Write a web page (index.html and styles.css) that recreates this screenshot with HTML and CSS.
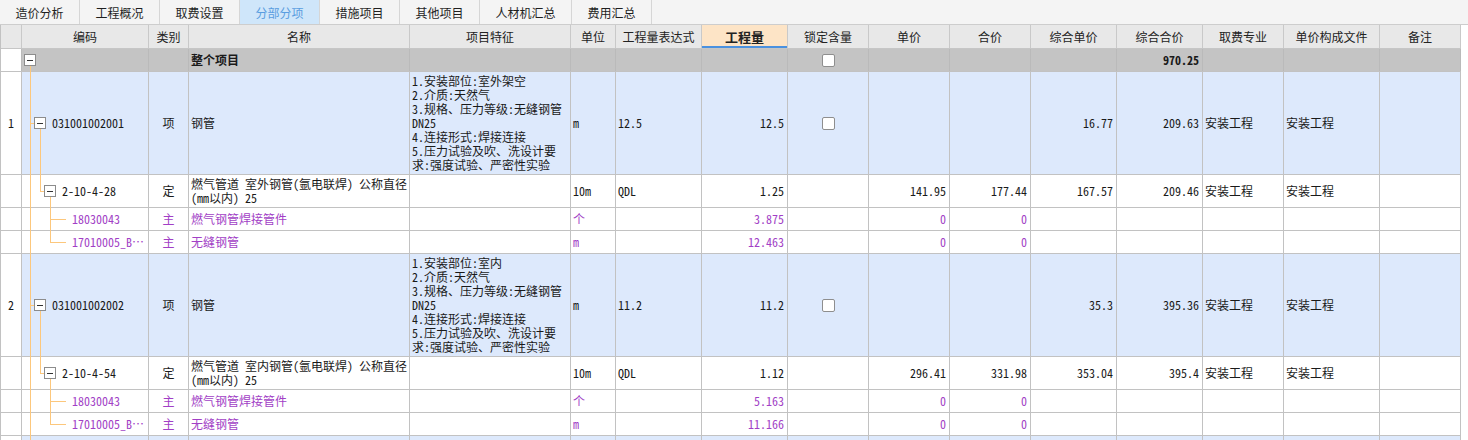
FILE: index.html
```html
<!DOCTYPE html>
<html lang="zh-CN">
<head>
<meta charset="utf-8">
<title>分部分项</title>
<link rel="stylesheet" href="styles.css">
</head>
<body>
<div class="tabs">
  <div class="tab">造价分析</div>
  <div class="tab">工程概况</div>
  <div class="tab">取费设置</div>
  <div class="tab active">分部分项</div>
  <div class="tab">措施项目</div>
  <div class="tab">其他项目</div>
  <div class="tab wide">人材机汇总</div>
  <div class="tab">费用汇总</div>
</div>

<div class="grid">
  <div class="row hdr">
    <div class="c"></div>
    <div class="c">编码</div>
    <div class="c">类别</div>
    <div class="c">名称</div>
    <div class="c">项目特征</div>
    <div class="c">单位</div>
    <div class="c">工程量表达式</div>
    <div class="c hot">工程量</div>
    <div class="c">锁定含量</div>
    <div class="c">单价</div>
    <div class="c">合价</div>
    <div class="c">综合单价</div>
    <div class="c">综合合价</div>
    <div class="c">取费专业</div>
    <div class="c">单价构成文件</div>
    <div class="c">备注</div>
  </div>

  <div class="row grp h1">
    <div class="c num"></div>
    <div class="c code lv0"><span class="ln va-down"></span><span class="box"></span></div>
    <div class="c"></div>
    <div class="c b">整个项目</div>
    <div class="c"></div>
    <div class="c"></div>
    <div class="c"></div>
    <div class="c"></div>
    <div class="c mid"><span class="cb"></span></div>
    <div class="c"></div>
    <div class="c"></div>
    <div class="c"></div>
    <div class="c r b">970.25</div>
    <div class="c"></div>
    <div class="c"></div>
    <div class="c"></div>
  </div>

  <div class="row item h7">
    <div class="c num">1</div>
    <div class="c code lv1"><span class="ln va"></span><span class="ln h1l"></span><span class="ln vb-down"></span><span class="box"></span><span>031001002001</span></div>
    <div class="c mid">项</div>
    <div class="c">钢管</div>
    <div class="c"><div class="ml">1.安装部位:室外架空<br>2.介质:天然气<br>3.规格、压力等级:无缝钢管<br>DN25<br>4.连接形式:焊接连接<br>5.压力试验及吹、洗设计要<br>求:强度试验、严密性实验</div></div>
    <div class="c">m</div>
    <div class="c">12.5</div>
    <div class="c r">12.5</div>
    <div class="c mid"><span class="cb"></span></div>
    <div class="c"></div>
    <div class="c"></div>
    <div class="c r">16.77</div>
    <div class="c r">209.63</div>
    <div class="c">安装工程</div>
    <div class="c">安装工程</div>
    <div class="c"></div>
  </div>

  <div class="row plain h2">
    <div class="c num"></div>
    <div class="c code lv2"><span class="ln va"></span><span class="ln vb-up"></span><span class="ln h2l"></span><span class="ln vc-down"></span><span class="box"></span><span>2-10-4-28</span></div>
    <div class="c mid">定</div>
    <div class="c"><div class="ml">燃气管道 室外钢管(氩电联焊) 公称直径<br>(mm以内) 25</div></div>
    <div class="c"></div>
    <div class="c">10m</div>
    <div class="c">QDL</div>
    <div class="c r">1.25</div>
    <div class="c"></div>
    <div class="c r">141.95</div>
    <div class="c r">177.44</div>
    <div class="c r">167.57</div>
    <div class="c r">209.46</div>
    <div class="c">安装工程</div>
    <div class="c">安装工程</div>
    <div class="c"></div>
  </div>

  <div class="row plain mat h1">
    <div class="c num"></div>
    <div class="c code lv3"><span class="ln va"></span><span class="ln vc-full"></span><span class="ln h3l"></span><span>18030043</span></div>
    <div class="c mid">主</div>
    <div class="c">燃气钢管焊接管件</div>
    <div class="c"></div>
    <div class="c">个</div>
    <div class="c"></div>
    <div class="c r">3.875</div>
    <div class="c"></div>
    <div class="c r">0</div>
    <div class="c r">0</div>
    <div class="c"></div>
    <div class="c"></div>
    <div class="c"></div>
    <div class="c"></div>
    <div class="c"></div>
  </div>

  <div class="row plain mat h1">
    <div class="c num"></div>
    <div class="c code lv3"><span class="ln va"></span><span class="ln vc-up"></span><span class="ln h3l"></span><span>17010005_B…</span></div>
    <div class="c mid">主</div>
    <div class="c">无缝钢管</div>
    <div class="c"></div>
    <div class="c">m</div>
    <div class="c"></div>
    <div class="c r">12.463</div>
    <div class="c"></div>
    <div class="c r">0</div>
    <div class="c r">0</div>
    <div class="c"></div>
    <div class="c"></div>
    <div class="c"></div>
    <div class="c"></div>
    <div class="c"></div>
  </div>

  <div class="row item h7">
    <div class="c num">2</div>
    <div class="c code lv1"><span class="ln va"></span><span class="ln h1l"></span><span class="ln vb-down"></span><span class="box"></span><span>031001002002</span></div>
    <div class="c mid">项</div>
    <div class="c">钢管</div>
    <div class="c"><div class="ml">1.安装部位:室内<br>2.介质:天然气<br>3.规格、压力等级:无缝钢管<br>DN25<br>4.连接形式:焊接连接<br>5.压力试验及吹、洗设计要<br>求:强度试验、严密性实验</div></div>
    <div class="c">m</div>
    <div class="c">11.2</div>
    <div class="c r">11.2</div>
    <div class="c mid"><span class="cb"></span></div>
    <div class="c"></div>
    <div class="c"></div>
    <div class="c r">35.3</div>
    <div class="c r">395.36</div>
    <div class="c">安装工程</div>
    <div class="c">安装工程</div>
    <div class="c"></div>
  </div>

  <div class="row plain h2">
    <div class="c num"></div>
    <div class="c code lv2"><span class="ln va"></span><span class="ln vb-up"></span><span class="ln h2l"></span><span class="ln vc-down"></span><span class="box"></span><span>2-10-4-54</span></div>
    <div class="c mid">定</div>
    <div class="c"><div class="ml">燃气管道 室内钢管(氩电联焊) 公称直径<br>(mm以内) 25</div></div>
    <div class="c"></div>
    <div class="c">10m</div>
    <div class="c">QDL</div>
    <div class="c r">1.12</div>
    <div class="c"></div>
    <div class="c r">296.41</div>
    <div class="c r">331.98</div>
    <div class="c r">353.04</div>
    <div class="c r">395.4</div>
    <div class="c">安装工程</div>
    <div class="c">安装工程</div>
    <div class="c"></div>
  </div>

  <div class="row plain mat h1">
    <div class="c num"></div>
    <div class="c code lv3"><span class="ln va"></span><span class="ln vc-full"></span><span class="ln h3l"></span><span>18030043</span></div>
    <div class="c mid">主</div>
    <div class="c">燃气钢管焊接管件</div>
    <div class="c"></div>
    <div class="c">个</div>
    <div class="c"></div>
    <div class="c r">5.163</div>
    <div class="c"></div>
    <div class="c r">0</div>
    <div class="c r">0</div>
    <div class="c"></div>
    <div class="c"></div>
    <div class="c"></div>
    <div class="c"></div>
    <div class="c"></div>
  </div>

  <div class="row plain mat h1">
    <div class="c num"></div>
    <div class="c code lv3"><span class="ln va"></span><span class="ln vc-up"></span><span class="ln h3l"></span><span>17010005_B…</span></div>
    <div class="c mid">主</div>
    <div class="c">无缝钢管</div>
    <div class="c"></div>
    <div class="c">m</div>
    <div class="c"></div>
    <div class="c r">11.166</div>
    <div class="c"></div>
    <div class="c r">0</div>
    <div class="c r">0</div>
    <div class="c"></div>
    <div class="c"></div>
    <div class="c"></div>
    <div class="c"></div>
    <div class="c"></div>
  </div>

  <div class="row item h7 top">
    <div class="c num">3</div>
    <div class="c code lv1"><span class="ln va"></span></div>
    <div class="c"></div>
    <div class="c"></div>
    <div class="c"><div class="ml">1.安装部位:室内<br>2.介质:天然气</div></div>
    <div class="c"></div>
    <div class="c"></div>
    <div class="c"></div>
    <div class="c"></div>
    <div class="c"></div>
    <div class="c"></div>
    <div class="c"></div>
    <div class="c"></div>
    <div class="c"></div>
    <div class="c"></div>
    <div class="c"></div>
  </div>
</div>
</body>
</html>
```

FILE: styles.css
```css
html, body {
  margin: 0;
  padding: 0;
  background: #ffffff;
}

body {
  font-family: "Noto Sans Mono CJK SC", "Noto Sans CJK SC", monospace;
  font-size: 12px;
  color: #1a1a1a;
  overflow: hidden;
  height: 440px;
}

/* ---------- tab strip ---------- */
.tabs {
  display: flex;
  height: 24px;
  background: #f4f4f4;
  border-bottom: 1px solid #cdcdcd;
  font-family: "Noto Sans CJK SC", sans-serif;
  font-size: 12px;
}

.tab {
  width: 79px;
  border-right: 1px solid #d6d6d6;
  display: flex;
  align-items: center;
  justify-content: center;
  color: #1f1f1f;
}

.tab.wide {
  width: 91px;
}

.tab.active {
  background: #cfe6fa;
  color: #5a9de0;
}

/* ---------- grid ---------- */
.grid {
  --cols: 21px 127px 40px 221px 161px 45px 86px 86px 81px 81px 81px 86px 86px 81px 96px 81px;
  width: 1461px;
  border-left: 1px solid #c2c2c2;
  box-sizing: border-box;
}

.row {
  display: grid;
  grid-template-columns: var(--cols);
  border-bottom: 1px solid #c2c2c2;
  box-sizing: border-box;
}

.h1 { height: 23px; }
.h2 { height: 33px; }
.h7 { height: 103px; }

.c {
  border-right: 1px solid #c2c2c2;
  display: flex;
  align-items: center;
  padding: 0 2px;
  overflow: hidden;
  white-space: nowrap;
  line-height: 14px;
  min-width: 0;
}

.c.r {
  justify-content: flex-end;
  padding-right: 3px;
}

.c.mid {
  justify-content: center;
}

.c.b {
  font-weight: bold;
}

.c.num {
  justify-content: center;
  background: #ffffff;
  padding: 0;
}

.ml {
  white-space: nowrap;
  line-height: 14px;
}

/* header */
.hdr {
  height: 24px;
  background: #e8e8e8;
  border-bottom-color: #c6c6c6;
}

.hdr .c {
  justify-content: center;
  border-right-color: #c9c9c9;
  color: #222;
}

.hdr .c.hot {
  background: #fde4c6;
  font-weight: bold;
  font-size: 13px;
  box-shadow: inset 0 -2px 0 #4a91e0;
}

/* group row */
.grp {
  background: #c4c4c4;
}

.grp .c {
  border-right-color: #bababa;
}

/* item (清单) rows */
.item {
  background: #dde9fc;
}

.item.top .c {
  align-items: flex-start;
  padding-top: 3px;
}

.item.top .c.num {
  align-items: center;
  padding-top: 0;
}

.plain {
  background: #ffffff;
}

.mat .c {
  color: #a23fc6;
}

/* ---------- tree column ---------- */
.code {
  position: relative;
  overflow: visible;
}

.code.lv0 { padding-left: 2px; }
.code.lv1 { padding-left: 12px; }
.code.lv2 { padding-left: 22px; }
.code.lv3 { padding-left: 50px; }

.box {
  flex: none;
  width: 12px;
  height: 12px;
  box-sizing: border-box;
  border: 1px solid #8c8c8c;
  background: #ffffff;
  margin-right: 6px;
  display: flex;
  align-items: center;
  justify-content: center;
  position: relative;
  z-index: 1;
}

.box::after {
  content: "";
  width: 6px;
  height: 1px;
  background: #333333;
}

.ln {
  position: absolute;
  background: #fcc77c;
}

.va { left: 8px; width: 1px; top: 0; bottom: -1px; }
.va-down { left: 8px; width: 1px; top: calc(50% + 5px); bottom: -1px; }
.h1l { left: 8px; width: 5px; height: 1px; top: 50%; }
.vb-down { left: 18px; width: 1px; top: calc(50% + 5px); bottom: -1px; }
.vb-up { left: 18px; width: 1px; top: 0; height: 50%; }
.h2l { left: 18px; width: 5px; height: 1px; top: 50%; }
.vc-down { left: 28px; width: 1px; top: calc(50% + 5px); bottom: -1px; }
.vc-full { left: 28px; width: 1px; top: 0; bottom: -1px; }
.vc-up { left: 28px; width: 1px; top: 0; height: 50%; }
.h3l { left: 28px; width: 16px; height: 1px; top: 50%; }

/* checkbox */
.cb {
  width: 13px;
  height: 13px;
  box-sizing: border-box;
  border: 1px solid #8e8e8e;
  border-radius: 2px;
  background: #ffffff;
}
```
